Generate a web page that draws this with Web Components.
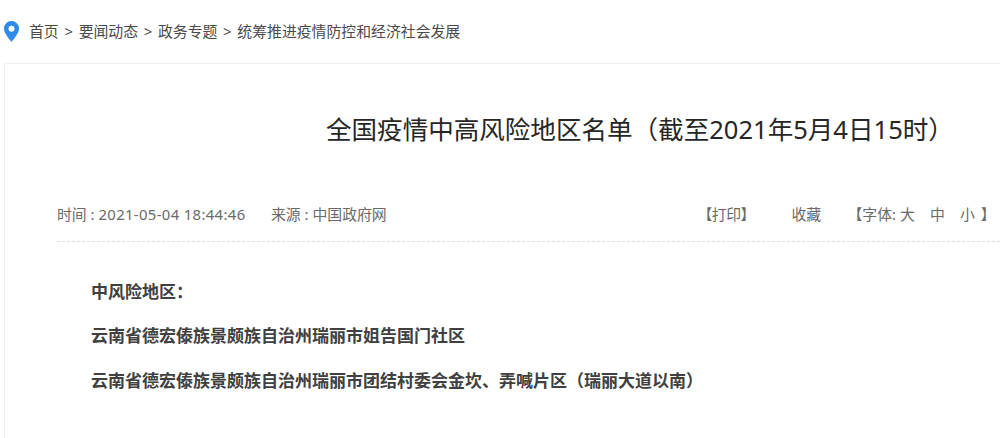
<!DOCTYPE html>
<html lang="zh-CN">
<head>
<meta charset="utf-8">
<title>全国疫情中高风险地区名单</title>
<style>
  body {
    display: flex;
    flex-direction: column;
    height: 438px;
    margin: 0;
    background: #fff;
    font-family: "Noto Sans", "Noto Sans CJK SC", sans-serif;
    overflow: hidden;
  }
</style>
</head>
<body>
<crumb-trail>
  <crumb-item>首页</crumb-item>
  <crumb-item>要闻动态</crumb-item>
  <crumb-item>政务专题</crumb-item>
  <crumb-item>统筹推进疫情防控和经济社会发展</crumb-item>
</crumb-trail>
<article-panel>
  <span slot="title">全国疫情中高风险地区名单（截至2021年5月4日15时）</span>
  <article-meta slot="meta" time="2021-05-04 18:44:46" source="中国政府网"></article-meta>
  <p>中风险地区：</p>
  <p>云南省德宏傣族景颇族自治州瑞丽市姐告国门社区</p>
  <p>云南省德宏傣族景颇族自治州瑞丽市团结村委会金坎、弄喊片区（瑞丽大道以南）</p>
</article-panel>

<script>
// Breadcrumb bar with the location pin
class CrumbTrail extends HTMLElement {
  constructor() {
    super();
    this.attachShadow({ mode: 'open' });
    this.shadowRoot.innerHTML = `
      <style>
        :host {
          display: flex;
          flex: none;
          align-items: flex-start;
          box-sizing: border-box;
          height: 63px;
          padding: 21px 0 0 4px;
          color: #4a4a4a;
          font-size: 14.87px;
          line-height: 20px;
          white-space: nowrap;
        }
        svg { display: block; margin-right: 10px; }
      </style>
      <svg width="15" height="21" viewBox="0 0 15 21">
        <path fill="#2d8cea" fill-rule="evenodd" d="M7.5 0A7.4 7.4 0 0 0 0 7.5C0 12 4.2 16.5 7.5 21C10.8 16.5 15 12 15 7.5A7.4 7.4 0 0 0 7.5 0ZM7.5 4.8A3 3 0 1 1 7.5 10.8A3 3 0 1 1 7.5 4.8Z"/>
      </svg>
      <slot></slot>
    `;
  }
}
customElements.define('crumb-trail', CrumbTrail);

class CrumbItem extends HTMLElement {
  constructor() {
    super();
    this.attachShadow({ mode: 'open' });
    this.shadowRoot.innerHTML = `
      <style>
        :host { display: flex; }
        .sep { width: 19.9px; text-align: center; }
        :host(:first-of-type) .sep { display: none; }
      </style>
      <span class="sep">&gt;</span><slot></slot>
    `;
  }
}
customElements.define('crumb-item', CrumbItem);

// Article box, open on the right and at the bottom
class ArticlePanel extends HTMLElement {
  constructor() {
    super();
    this.attachShadow({ mode: 'open' });
    this.shadowRoot.innerHTML = `
      <style>
        :host {
          display: block;
          flex: 1;
          box-sizing: border-box;
          min-height: 0;
          margin-left: 4px;
          padding-left: 52px;
          border: solid #f0f0f0;
          border-width: 1px 0 0 1px;
        }
        h1 {
          margin: 0;
          padding: 45px 0 0 269px;
          color: #262626;
          font-size: 25.55px;
          font-weight: 400;
          line-height: 40px;
          white-space: nowrap;
        }
        .content { padding: 27.5px 0 0 34px; }
        ::slotted(p) {
          margin: 0;
          color: #404040;
          font-size: 17px;
          font-weight: 700;
          line-height: 44.5px;
          white-space: nowrap;
        }
      </style>
      <h1><slot name="title"></slot></h1>
      <slot name="meta"></slot>
      <div class="content"><slot></slot></div>
    `;
  }
}
customElements.define('article-panel', ArticlePanel);

class ArticleMeta extends HTMLElement {
  constructor() {
    super();
    this.attachShadow({ mode: 'open' });
  }

  connectedCallback() {
    this.shadowRoot.innerHTML = `
      <style>
        :host {
          display: flex;
          box-sizing: border-box;
          height: 93px;
          padding-top: 54px;
          border-bottom: 1px dashed #ddd;
          color: #6a6a6a;
          font-size: 14.87px;
          line-height: 22px;
          white-space: nowrap;
        }
        .time { width: 214px; }
        .date { letter-spacing: 0.35px; }
        .source { width: 426.5px; }
        .print { width: 94px; letter-spacing: -0.5px; }
        .save { width: 56px; }
        .sizes { display: flex; }
        .sizes span { width: 30px; }
        .sizes .small { width: 17px; }
      </style>
      <span class="time">时间 : <span class="date">${this.getAttribute('time')}</span></span>
      <span class="source">来源 : ${this.getAttribute('source')}</span>
      <span class="print">【打印】</span>
      <span class="save">收藏</span>
      <div class="sizes">【字体:&nbsp;<span>大</span><span>中</span><span class="small">小</span>&nbsp;】</div>
    `;
  }
}
customElements.define('article-meta', ArticleMeta);
</script>
</body>
</html>
